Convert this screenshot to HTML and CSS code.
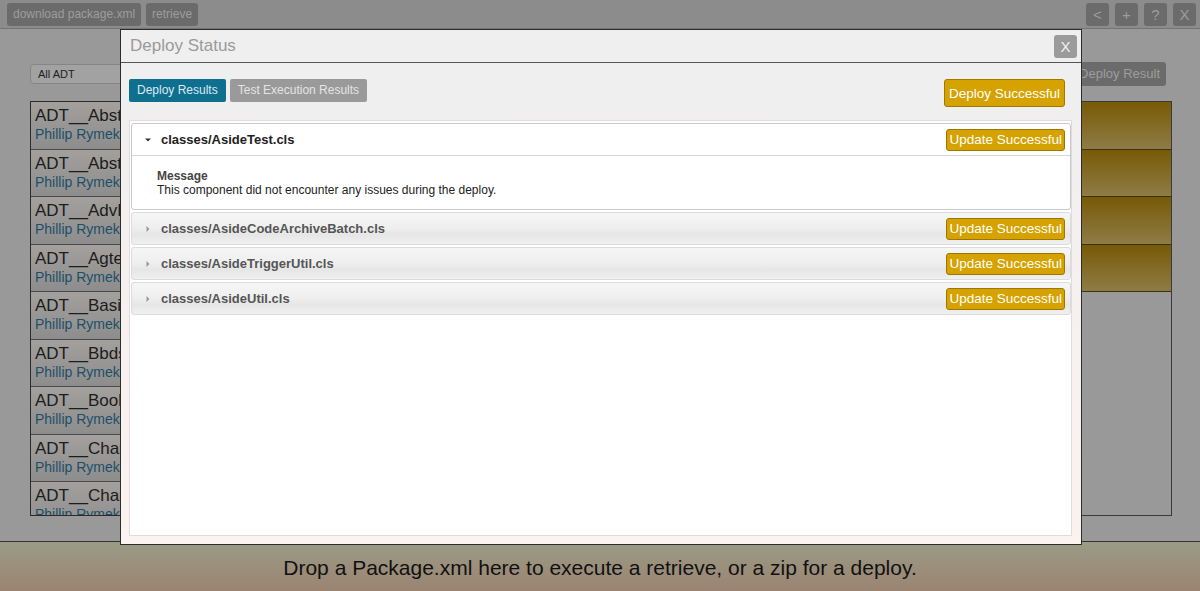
FILE: index.html
```html
<!DOCTYPE html>
<html>
<head>
<meta charset="utf-8">
<link rel="stylesheet" href="styles.css">
</head>
<body>
<div class="page">
  <div class="topbar">
    <div class="tb-left">
      <span class="tb-btn">download package.xml</span>
      <span class="tb-btn">retrieve</span>
    </div>
    <div class="tb-right">
      <span class="tb-btn sq">&lt;</span>
      <span class="tb-btn sq">+</span>
      <span class="tb-btn sq">?</span>
      <span class="tb-btn sq">X</span>
    </div>
  </div>
  <div class="main">
    <div class="leftcol">
      <div class="select">All ADT</div>
      <div class="list">
        <div class="item"><div class="iname">ADT__AbstractBatch</div><div class="iauth">Phillip Rymek</div></div>
        <div class="item"><div class="iname">ADT__AbstractTrigger</div><div class="iauth">Phillip Rymek</div></div>
        <div class="item"><div class="iname">ADT__AdvDebug</div><div class="iauth">Phillip Rymek</div></div>
        <div class="item"><div class="iname">ADT__AgteAll</div><div class="iauth">Phillip Rymek</div></div>
        <div class="item"><div class="iname">ADT__BasicUtil</div><div class="iauth">Phillip Rymek</div></div>
        <div class="item"><div class="iname">ADT__BbdsMap</div><div class="iauth">Phillip Rymek</div></div>
        <div class="item"><div class="iname">ADT__BookKeeper</div><div class="iauth">Phillip Rymek</div></div>
        <div class="item"><div class="iname">ADT__ChangeSet</div><div class="iauth">Phillip Rymek</div></div>
        <div class="item"><div class="iname">ADT__ChangeTrack</div><div class="iauth">Phillip Rymek</div></div>
      </div>
    </div>
    <div class="rightcol">
      <div class="rc-top"><span class="tb-btn">Deploy Result</span></div>
      <div class="rtable">
        <div class="grow"></div>
        <div class="grow"></div>
        <div class="grow"></div>
        <div class="grow"></div>
      </div>
    </div>
  </div>
  <div class="dropbar">Drop a Package.xml here to execute a retrieve, or a zip for a deploy.</div>

  <div class="modal">
    <div class="m-head">
      <span class="m-title">Deploy Status</span>
      <span class="m-close">X</span>
    </div>
    <div class="m-body">
      <div class="m-tabs">
        <div class="tabs">
          <span class="tab active">Deploy Results</span>
          <span class="tab">Test Execution Results</span>
        </div>
        <span class="deploy-ok">Deploy Successful</span>
      </div>
      <div class="panels">
        <div class="panel open">
          <div class="p-head">
            <svg class="caret" width="6" height="6" viewBox="0 0 6 6"><polygon points="0,1.5 6,1.5 3,4.5" fill="#333"/></svg>
            <span class="p-title">classes/AsideTest.cls</span>
            <span class="badge">Update Successful</span>
          </div>
          <div class="p-body">
            <div class="msg-label">Message</div>
            <div class="msg-text">This component did not encounter any issues during the deploy.</div>
          </div>
        </div>
        <div class="panel closed">
          <div class="p-head">
            <svg class="caret" width="6" height="6" viewBox="0 0 6 6"><polygon points="1.5,0 4.5,3 1.5,6" fill="#999"/></svg>
            <span class="p-title">classes/AsideCodeArchiveBatch.cls</span>
            <span class="badge">Update Successful</span>
          </div>
        </div>
        <div class="panel closed">
          <div class="p-head">
            <svg class="caret" width="6" height="6" viewBox="0 0 6 6"><polygon points="1.5,0 4.5,3 1.5,6" fill="#999"/></svg>
            <span class="p-title">classes/AsideTriggerUtil.cls</span>
            <span class="badge">Update Successful</span>
          </div>
        </div>
        <div class="panel closed">
          <div class="p-head">
            <svg class="caret" width="6" height="6" viewBox="0 0 6 6"><polygon points="1.5,0 4.5,3 1.5,6" fill="#999"/></svg>
            <span class="p-title">classes/AsideUtil.cls</span>
            <span class="badge">Update Successful</span>
          </div>
        </div>
      </div>
    </div>
  </div>
</div>
</body>
</html>
```
FILE: styles.css
```css
* { box-sizing: border-box; }
html, body { margin: 0; padding: 0; }
body {
  font-family: "Liberation Sans", Arial, sans-serif;
  background: #999;
  width: 1200px;
  height: 591px;
  overflow: hidden;
}
.page {
  position: relative;
  width: 1200px;
  height: 591px;
  display: flex;
  flex-direction: column;
}
.topbar {
  height: 29px;
  flex: 0 0 29px;
  background: #8c8c8c;
  border-bottom: 1px solid #747474;
  display: flex;
  justify-content: space-between;
  padding: 3px 4px 0 7px;
}
.tb-left, .tb-right { display: flex; }
.tb-left { gap: 5px; }
.tb-right { gap: 6px; }
.tb-btn {
  display: inline-block;
  height: 23px;
  line-height: 23px;
  padding: 0 6px;
  background: #6b6b6b;
  color: #9d9d9d;
  font-size: 12px;
  border-radius: 3px;
}
.tb-btn.sq {
  width: 23px;
  padding: 0;
  text-align: center;
  font-size: 15px;
}
.main {
  flex: 1;
  display: flex;
  justify-content: space-between;
  padding: 0 28px 0 30px;
}
.leftcol { width: 560px; }
.select {
  margin-top: 35px;
  height: 20px;
  line-height: 19px;
  background: #a2a2a2;
  border: 1px solid #858585;
  border-radius: 4px;
  font-size: 11px;
  color: #1e1e1e;
  padding-left: 7px;
}
.list {
  margin-top: 17px;
  height: 415px;
  border: 1px solid #2b2b2b;
  overflow: hidden;
}
.item {
  height: 47.5px;
  border-bottom: 1px solid #4a4a4a;
  background: linear-gradient(#a3a09d, #8d8d8d);
  padding: 3px 0 0 4px;
}
.iname { font-size: 17px; line-height: 21px; color: #1c1c1c; }
.iauth { font-size: 14px; line-height: 17px; color: #1d4f67; }
.rightcol { width: 480px; display: flex; flex-direction: column; align-items: flex-end; }
.rc-top { margin-top: 33px; height: 24px; padding-right: 6px; }
.rc-top .tb-btn { height: 24px; line-height: 24px; font-size: 13px; }
.rtable {
  margin-top: 15px;
  width: 100%;
  height: 415px;
  border: 1px solid #3a3a3a;
}
.grow {
  height: 47.5px;
  border-bottom: 1px solid #3a3210;
  background: linear-gradient(#785a06, #8e7c47);
}
.dropbar {
  flex: 0 0 50px;
  height: 50px;
  border-top: 1px solid #333;
  background: linear-gradient(#9a9b86, #9b8471);
  text-align: center;
  font-size: 21px;
  line-height: 52px;
  color: #111;
}

/* modal */
.modal {
  position: absolute;
  left: 120px;
  top: 29px;
  width: 962px;
  height: 516px;
  border: 1px solid #2c2c2c;
  display: flex;
  flex-direction: column;
  background: #efefef;
}
.m-head {
  flex: 0 0 33px;
  height: 33px;
  border-bottom: 1px solid #555;
  background: #efefef;
  display: flex;
  align-items: center;
  justify-content: space-between;
  padding: 0 4px 0 9px;
}
.m-title { font-size: 17px; color: #9a9a9a; }
.m-close {
  width: 23px;
  height: 23px;
  background: #9b9b9b;
  border-radius: 3px;
  color: #f2f2f2;
  font-size: 15px;
  line-height: 23px;
  text-align: center;
}
.m-body {
  flex: 1;
  display: flex;
  flex-direction: column;
  padding: 16px 9px 8px 8px;
  background: linear-gradient(#efefef, #fcf2ef);
}
.m-tabs {
  display: flex;
  justify-content: space-between;
  align-items: flex-start;
  padding-right: 7px;
  height: 28px;
}
.tabs { display: flex; gap: 4px; }
.tab {
  height: 23px;
  line-height: 23px;
  padding: 0 8px;
  font-size: 12px;
  background: #9a9a9a;
  color: #e4e4e4;
  border-radius: 2px;
}
.tab.active { background: #0f6f8f; color: #dcebf1; }
.deploy-ok {
  height: 28px;
  line-height: 27px;
  padding: 0 4px;
  background: #d5a200;
  border: 1px solid #9f7a00;
  border-radius: 3px;
  color: #fff;
  font-size: 13.5px;
}
.panels {
  margin-top: 13px;
  flex: 1;
  background: #fff;
  border: 1px solid #e3dbdb;
  padding: 2px 0 2px 1px;
}
.panel { border-radius: 3px; margin-bottom: 2px; }
.panel.open { border: 1px solid #c9c9c9; background: #fff; }
.panel.closed {
  height: 33px;
  border: 1px solid #dcdcdc;
  background: linear-gradient(#f6f6f6 0%, #eeeeee 50%, #e6e6e6 70%, #f0f0f0 100%);
}
.p-head {
  height: 31px;
  display: flex;
  align-items: center;
  padding: 0 5px 0 13px;
}
.panel.open .p-head { height: 32px; border-bottom: 1px solid #d6d6d6; }
.caret { flex: 0 0 6px; }
.p-title {
  margin-left: 10px;
  flex: 1;
  font-size: 13px;
  font-weight: bold;
  color: #222;
}
.panel.closed .p-title { color: #555; }
.badge {
  height: 22px;
  line-height: 20px;
  padding: 0 2px;
  background: #d5a200;
  border: 1px solid #9c7800;
  border-radius: 3px;
  color: #fff;
  font-size: 13.5px;
}
.p-body { padding: 13px 25px 12px; }
.msg-label { font-size: 12px; line-height: 14px; font-weight: bold; color: #444; }
.msg-text { font-size: 12px; line-height: 14px; color: #222; }
```
